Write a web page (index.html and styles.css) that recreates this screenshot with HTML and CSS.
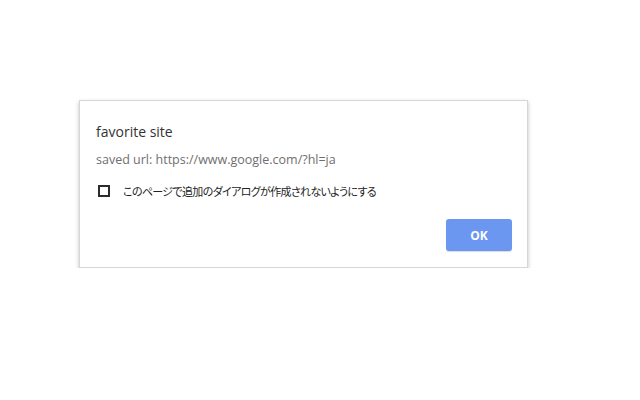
FILE: index.html
```html
<!DOCTYPE html>
<html lang="ja">
<head>
<meta charset="utf-8">
<link rel="stylesheet" href="styles.css">
</head>
<body>
<div class="page">
  <div class="dialog">
    <div class="title">favorite site</div>
    <div class="message">saved url: https://www.google.com/?hl=ja</div>
    <label class="suppress">
      <span class="box"></span>
      <span class="suppress-text">このページで追加のダイアログが作成されないようにする</span>
    </label>
    <div class="buttons">
      <button class="ok">OK</button>
    </div>
  </div>
</div>
</body>
</html>
```

FILE: styles.css
```css
html, body {
  margin: 0;
  background: #ffffff;
}
.page {
  padding: 100px 0 0 79px;
  font-family: "Open Sans", "Noto Sans", "Noto Sans CJK JP", sans-serif;
}
.dialog {
  box-sizing: border-box;
  width: 449px;
  height: 168px;
  border: 1px solid #d6d6d6;
  box-shadow: 0 2px 4px rgba(0, 0, 0, 0.25);
  background: #fff;
  padding: 21px 15px 0 16px;
  display: flex;
  flex-direction: column;
}
.title {
  font-size: 14px;
  line-height: 20px;
  color: #333;
}
.message {
  margin-top: 9px;
  font-size: 12.5px;
  line-height: 18px;
  color: #6f6f6f;
}
.suppress {
  margin-top: 12px;
  display: flex;
  align-items: center;
  height: 20px;
}
.box {
  box-sizing: border-box;
  width: 12px;
  height: 12px;
  border: 2px solid #2b2b2b;
  margin-left: 2px;
}
.suppress-text {
  margin-left: 13px;
  font-family: "Noto Sans CJK JP", sans-serif;
  font-size: 11px;
  font-feature-settings: "palt";
  color: #222;
  letter-spacing: -0.65px;
}
.buttons {
  margin-top: auto;
  margin-bottom: 16px;
  display: flex;
  justify-content: flex-end;
}
.ok {
  width: 66px;
  height: 32px;
  border: none;
  border-radius: 3px;
  background: #6b97f1;
  color: #fff;
  font-family: "Open Sans", sans-serif;
  font-weight: 700;
  font-size: 12px;
  box-shadow: 0 1px 1px rgba(0, 0, 0, 0.15);
}
```
